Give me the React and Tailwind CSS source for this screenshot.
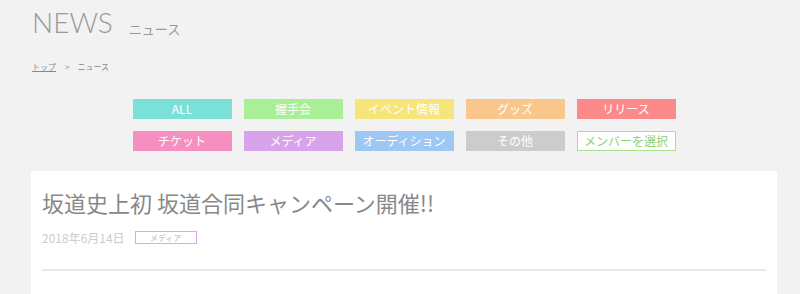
import React from 'react';

const categories = [
    { label: 'ALL', className: 'bg-[#7be0d8] text-white' },
    { label: '握手会', className: 'bg-[#a8ef96] text-white' },
    { label: 'イベント情報', className: 'bg-[#f6e57a] text-white' },
    { label: 'グッズ', className: 'bg-[#f9c78c] text-white' },
    { label: 'リリース', className: 'bg-[#fd8a8a] text-white' },
    { label: 'チケット', className: 'bg-[#f58fc0] text-white' },
    { label: 'メディア', className: 'bg-[#d9a3ec] text-white' },
    { label: 'オーディション', className: 'bg-[#9dc8f4] text-white' },
    { label: 'その他', className: 'bg-[#cccccc] text-white' },
    { label: 'メンバーを選択', className: 'bg-white border border-[#a8e08e] text-[#8fcf72]' },
];

const jp = { fontFamily: '"Noto Sans CJK JP", "Noto Sans", sans-serif' };

export default function App() {
    return (
        <div className="min-h-[294px] bg-[#f2f2f2] overflow-hidden" style={jp}>
            <div className="ml-[31px] w-[746px]">
                <div className="flex items-end pt-[6px] pl-[1px] h-[36px]">
                    <h1
                        className="text-[28px] leading-none font-light text-[#999]"
                        style={{ fontFamily: 'Lato, sans-serif' }}
                    >
                        NEWS
                    </h1>
                    <span className="ml-[16px] mb-[1px] text-[13px] leading-none text-[#999]">ニュース</span>
                </div>

                <div className="flex items-center mt-[27px] pl-[1px] text-[8px] leading-none text-[#888]">
                    <a className="underline">トップ</a>
                    <span className="ml-[9px]">&gt;</span>
                    <span className="ml-[8px]">ニュース</span>
                </div>

                <div className="grid grid-cols-[repeat(5,99px)] gap-x-[12px] gap-y-[12px] justify-center mt-[28px]">
                    {categories.map((c) => (
                        <button
                            key={c.label}
                            className={`h-[20px] flex items-center justify-center text-[12px] leading-none ${c.className}`}
                        >
                            {c.label}
                        </button>
                    ))}
                </div>

                <div className="bg-white mt-[20px] px-[11px] pt-[17px] pb-[30px]">
                    <h2 className="text-[22px] leading-[28px] text-[#888]">坂道史上初 坂道合同キャンペーン開催!!</h2>
                    <div className="flex items-center mt-[15px] h-[13px]">
                        <span className="text-[12px] leading-none text-[#ccc]">2018年6月14日</span>
                        <span className="ml-[10px] w-[62px] h-[13px] border border-[#e0a4f2] flex items-center justify-center text-[8px] leading-none text-[#d9a3ec]">
                            メディア
                        </span>
                    </div>
                    <div className="mt-[25px] h-[2px] bg-[#e8e8e8]" />
                </div>
            </div>
        </div>
    );
}
